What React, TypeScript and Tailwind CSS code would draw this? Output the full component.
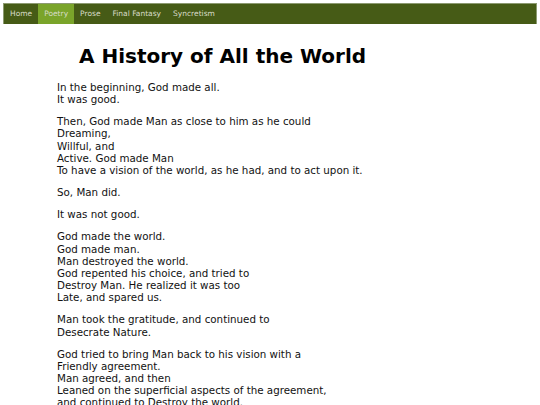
import React from "react";

const paras: string[][] = [
  ["In the beginning, God made all.", "It was good."],
  [
    "Then, God made Man as close to him as he could",
    "Dreaming,",
    "Willful, and",
    "Active. God made Man",
    "To have a vision of the world, as he had, and to act upon it.",
  ],
  ["So, Man did."],
  ["It was not good."],
  [
    "God made the world.",
    "God made man.",
    "Man destroyed the world.",
    "God repented his choice, and tried to",
    "Destroy Man. He realized it was too",
    "Late, and spared us.",
  ],
  ["Man took the gratitude, and continued to", "Desecrate Nature."],
  [
    "God tried to bring Man back to his vision with a",
    "Friendly agreement.",
    "Man agreed, and then",
    "Leaned on the superficial aspects of the agreement,",
    "and continued to Destroy the world.",
  ],
];

const nav = ["Home", "Poetry", "Prose", "Final Fantasy", "Syncretism"];

export default function App() {
  return (
    <div
      className="w-[540px] h-[405px] overflow-hidden bg-white text-black"
      style={{ fontFamily: '"DejaVu Sans", Verdana, sans-serif' }}
    >
      <div className="pt-[3px] px-[3px]">
        <div className="flex h-[21px] bg-[#465b16] border border-b-0 border-[#8c9a70]">
          {nav.map((n) => (
            <div
              key={n}
              className={`flex items-center px-[6px] text-[7.5px] text-[#d8dcc8] ${
                n === "Poetry" ? "bg-[#7aa42a]" : ""
              }`}
            >
              {n}
            </div>
          ))}
        </div>
      </div>
      <h1 className="ml-[79px] mt-[21px] text-[20px] font-bold leading-[23px]">
        A History of All the World
      </h1>
      <div className="ml-[57px] mt-[13px] text-[10.3px] leading-[12.15px] text-[#111]">
        {paras.map((p, i) => (
          <p key={i} className="mb-[10px]">
            {p.map((l, j) => (
              <React.Fragment key={j}>
                {l}
                {j < p.length - 1 && <br />}
              </React.Fragment>
            ))}
          </p>
        ))}
      </div>
    </div>
  );
}
